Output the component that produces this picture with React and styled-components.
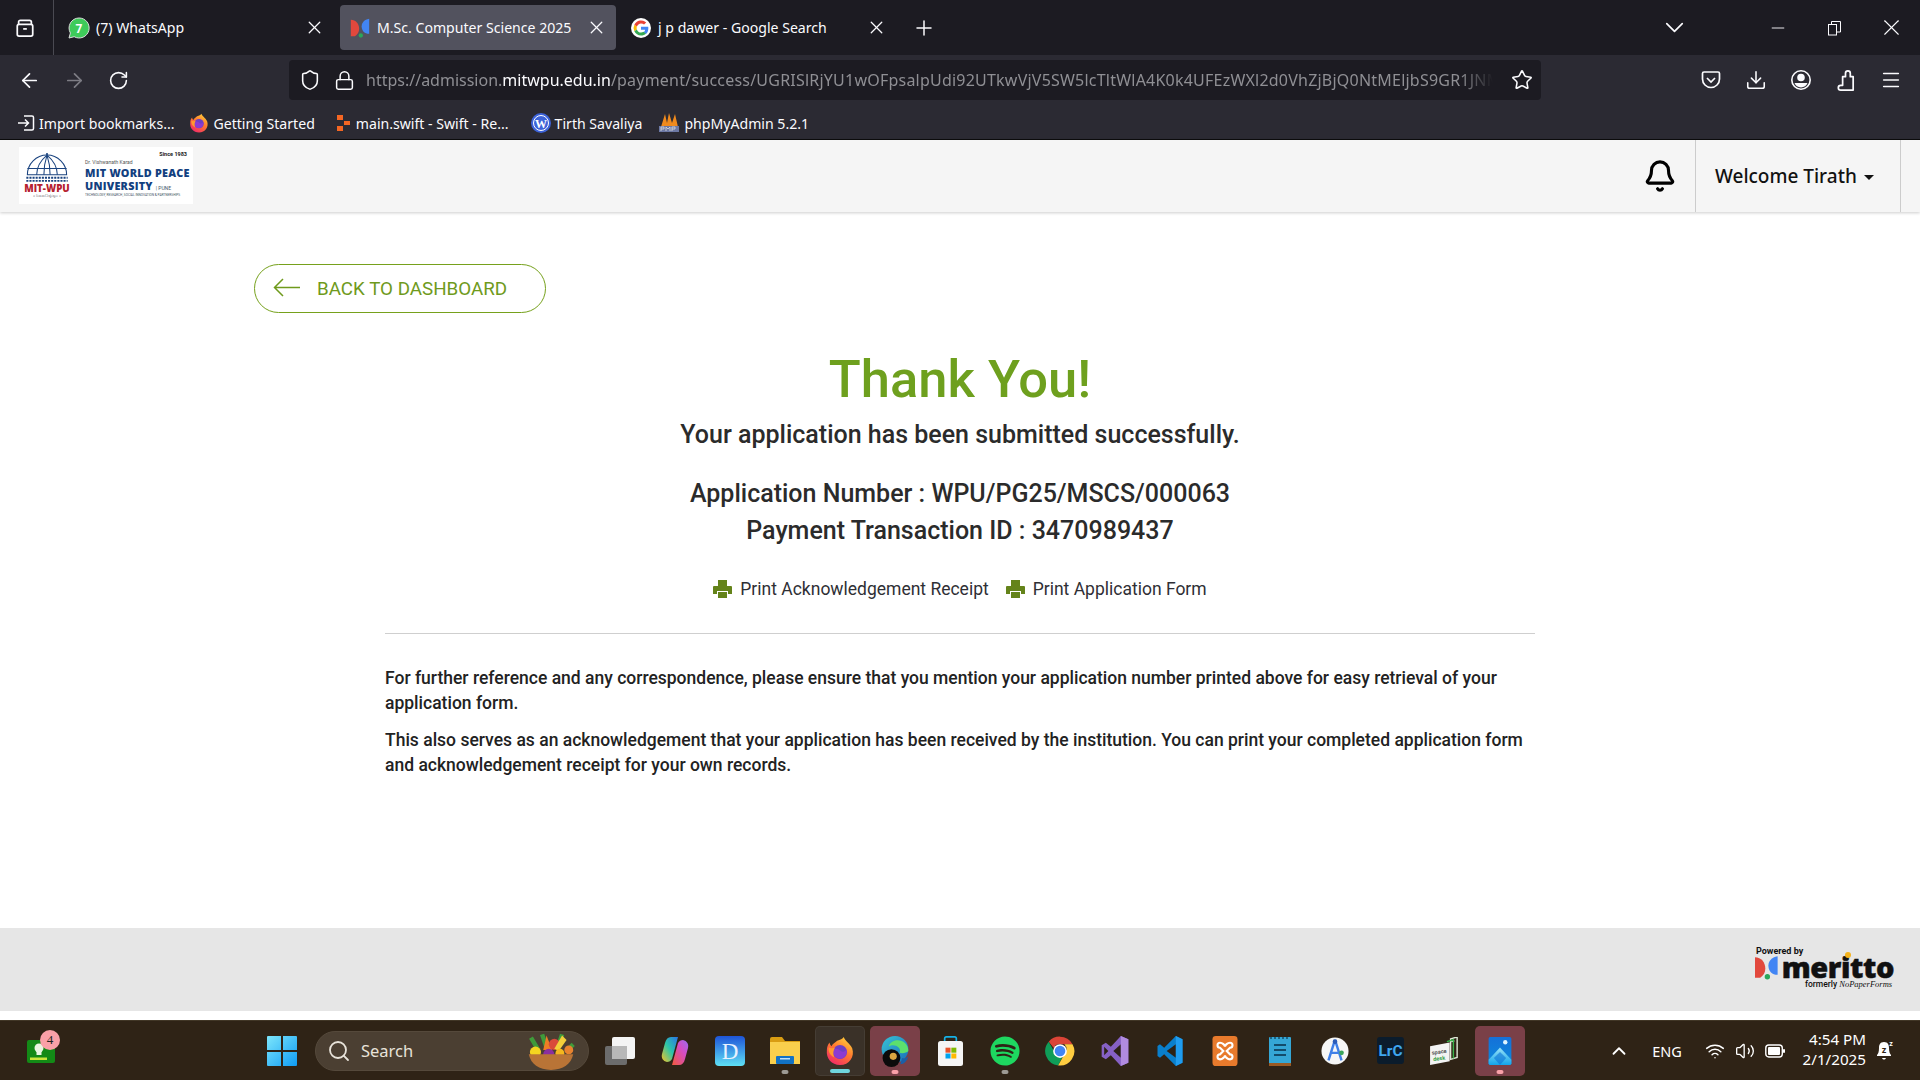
import React from "react";
import styled, { createGlobalStyle } from "styled-components";
import {
  ArrowLeft, ArrowRight, RotateCw, Shield, Lock, Star, Download, Menu, X, Plus,
  ChevronDown, ChevronUp, Minus, Bell, Search, Wifi, Volume2,
} from "lucide-react";
import { FaSpotify } from "react-icons/fa";

const Global = createGlobalStyle`
  html, body { margin: 0; padding: 0; background: #fff; }
  * { box-sizing: border-box; }
`;
const CHROME = `"Noto Sans", "Open Sans", sans-serif`;
const PAGE = `Roboto, "Liberation Sans", sans-serif`;

const Page = styled.div`
  width: 1920px; height: 1080px; overflow: hidden; display: flex; flex-direction: column;
  background: #fff; font-family: ${PAGE};
`;
const TabStrip = styled.div`
  height: 55px; background: #1c1b22; display: flex; align-items: center; color: #fbfbfe; flex: none;
`;
const TabGroupButton = styled.div`
  width: 54px; height: 55px; padding-right: 3px; border-right: 1px solid #4a4a52; display: flex; align-items: center; justify-content: center;
`;
const Tab = styled.div`
  width: 276px; height: 45px; margin-right: ${p => p.$mr || 0}px; border-radius: 4px; display: flex; align-items: center;
  padding: 0 ${p => p.$pr}px 0 ${p => p.$pl}px; gap: ${p => p.$gap}px; font: 400 14.1px ${CHROME}; background: ${p => p.$active ? "#52525e" : "transparent"};
  span { flex: 1; white-space: nowrap; }
`;
const NewTab = styled.div`margin-left: 16px; display: flex;`;
const WindowControls = styled.div`
  margin-left: auto; display: flex; align-items: center;
`;
const ListTabs = styled.div`margin-right: 59px; display: flex;`;
const WinButton = styled.div`width: 57px; display: flex; justify-content: center;`;

const Toolbar = styled.div`
  height: 45px; background: #2b2a33; display: flex; align-items: center; flex: none; color: #fbfbfe; padding-left: 18px;
`;
const NavButton = styled.div`width: 45px; margin-top: 5px; display: flex; align-items: center; color: ${p => p.$dim ? "#7d7c84" : "#fbfbfe"};`;
const UrlBar = styled.div`
  width: 1252px; height: 40px; margin: 5px 0 0 136px; background: #1c1b22; border-radius: 4px;
  display: flex; align-items: center; padding: 0 8px 0 3px; flex: none;
`;
const UrlIcon = styled.div`width: 35px; flex: none; display: flex; justify-content: center;`;
const UrlText = styled.div`
  flex: 1; overflow: hidden; white-space: nowrap; margin: 0 18px 0 4px; font: 400 16px ${CHROME}; color: #8f8f94;
  -webkit-mask-image: linear-gradient(to right, #000 97%, transparent 100%);
  b { font-weight: 400; color: #fbfbfe; }
  span { letter-spacing: .22px; }
`;
const ToolActions = styled.div`
  display: flex; align-items: center; margin: 5px 0 0 147px;
`;
const ToolIcon = styled.div`width: 45px; display: flex; justify-content: center;`;

const Bookmarks = styled.div`
  height: 40px; background: #2b2a33; border-bottom: 1px solid #0c0c0d; display: flex; align-items: center; padding: 7px 0 0 17px; color: #fbfbfe;
  flex: none; font: 400 14.1px ${CHROME};
`;
const Bookmark = styled.div`
  display: flex; align-items: center; gap: 4px; margin-right: ${p => p.$mr}px; white-space: nowrap;
`;

const Header = styled.header`
  height: 72px; background: #f5f5f5; box-shadow: 0 1px 3px rgba(0,0,0,.2); display: flex; align-items: stretch; flex: none;
  position: relative; padding-left: 19px; padding-right: 19px;
`;
const Logo = styled.div`
  width: 174px; height: 57px; margin-top: 7px; background: #fff; display: flex; align-items: center; padding: 0 5px 0 5px; gap: 2px; position: relative;
`;
const LogoMark = styled.div`width: 48px; display: flex; flex-direction: column; align-items: center;`;
const LogoWpu = styled.div`font: 800 9.8px/11px "Open Sans", sans-serif; color: #b5202f; margin-top: -1px; white-space: nowrap;`;
const LogoSub = styled.div`font: 400 3px/5px ${PAGE}; color: #555;`;
const LogoRule = styled.div`width: 1px; height: 44px; background: #1e4a86; margin: 0 6px 0 5px;`;
const LogoText = styled.div`display: flex; flex-direction: column; color: #12407f; white-space: nowrap; margin-top: 6px;`;
const LogoSince = styled.div`position: absolute; top: 4px; right: 6px; font: 700 5.5px ${PAGE}; color: #222;`;
const LogoSmall = styled.div`font: 400 5px/7px ${PAGE}; color: #555;`;
const LogoBig = styled.div`font: 800 10.8px/13px "Open Sans", sans-serif; letter-spacing: .25px; span { font: 400 5px ${PAGE}; color: #456; letter-spacing: 0; }`;
const LogoTiny = styled.div`font: 400 3.2px/6px ${PAGE}; color: #456;`;
const BellBox = styled.div`margin-left: auto; display: flex; align-items: center; padding-right: 18px; color: #000;`;
const Welcome = styled.div`
  width: 206px; border-left: 1px solid #ccc; border-right: 1px solid #ccc; display: flex; align-items: center; padding-left: 19px;
  font: 500 19px ${CHROME}; color: #111; white-space: nowrap;
  &::after { content: ""; margin-left: 7px; margin-top: 3px; border-left: 5px solid transparent; border-right: 5px solid transparent; border-top: 5px solid #111; }
`;

const Main = styled.main`flex: 1; display: flex; flex-direction: column; align-items: stretch; background: #fff; min-height: 0;`;
const BackRow = styled.div`padding: 52px 0 0 254px;`;
const BackButton = styled.a`
  width: 292px; height: 49px; border: 1px solid #76a11c; border-radius: 25px; display: flex; align-items: center; padding-left: 18px;
  color: #6f9a1c; font: 400 18.8px ${PAGE}; gap: 17px; text-decoration: none; white-space: nowrap;
  svg { margin-top: -3px; }
`;
const Center = styled.div`width: 1150px; margin: 0 auto; display: flex; flex-direction: column; align-items: stretch;`;
const Thanks = styled.h1`margin: 33px 0 0; text-align: center; font: 500 52.5px/66px ${PAGE}; color: #6ea01e;`;
const Submitted = styled.h2`margin: 5px 0 0; text-align: center; font: 500 25px/36px ${PAGE}; color: #2b2b2b;`;
const AppNumbers = styled.div`margin-top: 23px; text-align: center; font: 500 25px/36.5px ${PAGE}; color: #2b2b2b;`;
const PrintRow = styled.div`margin-top: 26px; display: flex; justify-content: center; gap: 17px; height: 27px; align-items: center;`;
const PrintLink = styled.a`
  display: flex; align-items: center; gap: 8px; color: #2f2f35; font: 400 17.5px ${PAGE}; white-space: nowrap;
`;
const Rule = styled.div`height: 1px; background: #cfcfcf; margin-top: 31px;`;
const Para = styled.p`
  margin: ${p => p.$mt}px 0 0; font: 500 17.5px/25px ${PAGE}; color: #222;
`;
const Footer = styled.footer`height: 83px; background: #e6e6e6; border-bottom: 1px solid #e6e6e6; flex: none; display: flex; justify-content: flex-end; padding: 18px 26px 0 0;`;
const Meritto = styled.div`width: 140px; display: flex; flex-direction: column; color: #111; position: relative; padding-left: 0;`;
const Powered = styled.div`font: 700 9px/10px ${PAGE}; margin-left: 2px;`;
const MerittoLine = styled.div`display: flex; align-items: center; height: 22px; gap: 3px;`;
const MerittoWord = styled.div`font: 800 29px/22px "Open Sans", sans-serif; letter-spacing: -.4px; -webkit-text-stroke: .5px #111;`;
const MerittoDot = styled.div`position: absolute; left: 91px; top: 6px; width: 6px; height: 6px; border-radius: 50%; background: #f5b21a;`;
const Formerly = styled.div`font: 500 8.5px/11px ${PAGE}; margin: 1px 0 0 51px; white-space: nowrap; i { font-family: "Liberation Serif", serif; }`;
const FooterGap = styled.div`height: 9px; background: #fff; flex: none;`;

const Taskbar = styled.div`
  height: 60px; background: #2f2316; border-top: 1px solid #413626; display: flex; align-items: center; flex: none; position: relative; color: #fff; font-family: ${CHROME};
`;
const Widget = styled.div`width: 28px; height: 23px; margin-left: 27px; margin-top: 1px; position: relative; flex: none; display: flex;`;
const Badge = styled.div`
  position: absolute; top: -10px; right: -5px; width: 20px; height: 20px; border-radius: 50%; background: #f9a0a8; color: #222; font: 400 13px/20px "Liberation Serif", serif; text-align: center;
`;
const Dock = styled.div`display: flex; align-items: center; margin-left: 202px;`;
const Cell = styled.div`
  width: 50px; height: 50px; margin-right: ${p => p.$mr ?? 5}px; border-radius: 5px; display: flex; align-items: center; justify-content: center; position: relative; flex: none;
  background: ${p => p.$bg || "transparent"};
  border: ${p => p.$bd ? "1px solid rgba(255,255,255,.06)" : "none"};
`;
const Dot = styled.div`
  position: absolute; bottom: 2px; left: 50%; transform: translateX(-50%); height: 4px; border-radius: 2px; width: ${p => p.$w || 7}px; background: ${p => p.$c || "#9d9a94"};
`;
const SearchPill = styled.div`
  width: 274px; height: 40px; margin: 0 6px 0 8px; border-radius: 20px; background: #4b3f32; display: flex; align-items: center; padding: 0 11px; color: #e8e3da; font: 400 16.5px ${CHROME}; gap: 10px; flex: none; position: relative; border: 1px solid #55493b;
`;
const Bowl = styled.div`position: absolute; right: 5px; top: -1px; display: flex;`;
const Tray = styled.div`margin-left: auto; display: flex; align-items: center; color: #fff; padding-right: 20px;`;
const TrayItem = styled.div`display: flex; justify-content: center; width: ${p => p.$w}px; font: 400 14.5px ${CHROME};`;
const Clock = styled.div`text-align: right; font: 400 15.2px/20px ${CHROME}; width: 76px; margin: 0 4px 4px 0; white-space: nowrap;`;

const WhatsApp = () => (
  <svg width="22" height="22" viewBox="0 0 22 22"><path d="M11 1a10 10 0 0 0-8.6 15L1 21l5.2-1.3A10 10 0 1 0 11 1z" fill="#3ecb5a" stroke="#dcdcdc" strokeWidth="1"/><text x="11" y="15.5" textAnchor="middle" fontSize="12" fontWeight="700" fill="#fff" fontFamily="Roboto">7</text></svg>
);
const MerittoMark = ({ s = 20 }) => (
  <svg width={s} height={s} viewBox="0 0 24 24"><path d="M1 2c6 0 10 5 10 11 0 4-2 7-5 9H1z" fill="#e2483d"/><path d="M23 1v18h-2c-5-1-7-5-7-9s3-8 9-9z" fill="#4285f4"/><circle cx="13" cy="21" r="2.6" fill="#2aa65a"/></svg>
);
const GoogleG = () => (
  <svg width="20" height="20" viewBox="0 0 48 48"><circle cx="24" cy="24" r="24" fill="#fff"/><path fill="#ea4335" d="M24 13c3 0 5.400 1 7.300 2.800l5.200-5.200A18 18 0 0 0 8 16l6 4.700C15.600 16.300 19.400 13 24 13z"/><path fill="#4285f4" d="M41.600 24.500c0-1.300-.1-2.300-.3-3.500H24v7h10c-.4 2.400-2 4.600-4 6l6 4.600c3.500-3.300 5.600-8 5.600-14.100z"/><path fill="#fbbc05" d="M14 27.300a10.500 10.500 0 0 1 0-6.600L8 16a18 18 0 0 0 0 16z"/><path fill="#34a853" d="M24 42c5 0 9-1.600 12-4.400L30 33c-1.600 1.100-3.600 1.900-6 1.900-4.600 0-8.400-3.200-10-7.600L8 32a18 18 0 0 0 16 10z"/></svg>
);
const Firefox = ({ s = 20 }) => (
  <svg width={s} height={s} viewBox="0 0 32 32">
    <defs><linearGradient id={`ff${s}`} x1="0.8" y1="0" x2="0.2" y2="1"><stop offset="0" stopColor="#ffd43a"/><stop offset=".45" stopColor="#ff7a2f"/><stop offset="1" stopColor="#f0256b"/></linearGradient></defs>
    <path fill={`url(#ff${s})`} d="M20 1c1 4 6 6 9 12 3 9-3 18-13 18C7 31 1 24 2 15c0-3 1-6 3-8 0 2 1 3 2 4 1-3 4-4 6-6 3-1 6-2 7-4z"/>
    <circle cx="16" cy="17" r="7.500" fill="#6d3fc4"/><path d="M9 15c3-3 6-1 8 1s5 0 6-2c1 5-2 10-7 10s-8-4-7-9z" fill="#8c3bd1"/>
    <path d="M4 12c2 2 5 1 7 0-2 3-3 7-1 11-4-2-7-6-6-11z" fill="#ff9a2e"/>
  </svg>
);
const ArchiveIcon = () => (
  <svg width="20" height="20" viewBox="0 0 22 22" fill="none" stroke="#fbfbfe" strokeWidth="1.900"><rect x="2.500" y="7" width="17" height="13" rx="2"/><path d="M4 7V4.500c0-1.300.7-2 2-2h10c1.300 0 2 .7 2 2V7"/><path d="M9 12h4"/></svg>
);
const ImportIcon = () => (
  <svg width="18" height="18" viewBox="0 0 18 18" fill="none" stroke="#fbfbfe" strokeWidth="1.500"><path d="M7 2h8a1.500 1.500 0 0 1 1.500 1.500v11A1.500 1.500 0 0 1 15 16H7"/><path d="M1 9h10M8 5.500 11.500 9 8 12.500"/></svg>
);
const SwiftBlocks = () => (
  <svg width="16" height="18" viewBox="0 0 16 18"><rect x="1" y="1" width="6" height="5" fill="#f46623"/><rect x="8" y="7" width="6" height="4" fill="#f46623"/><rect x="1" y="12" width="6" height="5" fill="#f46623"/></svg>
);
const WordPress = () => (
  <svg width="20" height="20" viewBox="0 0 20 20"><circle cx="10" cy="10" r="10" fill="#3d63d8"/><circle cx="10" cy="10" r="7.500" fill="none" stroke="#fff" strokeWidth="1"/><text x="10" y="14.500" textAnchor="middle" fontSize="12" fontWeight="700" fill="#fff" fontFamily="Liberation Serif">W</text></svg>
);
const PhpMyAdmin = () => (
  <svg width="22" height="22" viewBox="0 0 22 22"><path d="M3 15 7 2l2 9 2-10 3 10 3-9 3 13z" fill="#f08a1d"/><rect x="1" y="14" width="20" height="6" fill="#6c78a4"/><path d="M3 19v-4h3v2H3M8 19v-4l2 2 2-2v4M14 19v-4h3v2h-3" fill="none" stroke="#ddd" strokeWidth=".8"/></svg>
);
const PocketIcon = () => (
  <svg width="22" height="22" viewBox="0 0 22 22" fill="none" stroke="#fbfbfe" strokeWidth="1.700"><path d="M4 3h14a1.500 1.500 0 0 1 1.500 1.500V10a8.500 8.500 0 0 1-17 0V4.500A1.500 1.500 0 0 1 4 3z"/><path d="m7 9 4 4 4-4"/></svg>
);
const AccountIcon = () => (
  <svg width="22" height="22" viewBox="0 0 22 22" fill="none" stroke="#fbfbfe" strokeWidth="1.600"><circle cx="11" cy="11" r="9.200"/><circle cx="11" cy="8.500" r="3" fill="#fbfbfe"/><path d="M4.500 14h13a7 7 0 0 1-13 0z" fill="#fbfbfe" stroke="none"/></svg>
);
const PuzzleIcon = () => (
  <svg width="23" height="23" viewBox="0 0 24 24" fill="none" stroke="#fbfbfe" strokeWidth="1.800" strokeLinejoin="round"><path d="M9 8h3V4.500a2.500 2.500 0 0 1 5 0V8h3v14H7a2.500 2.500 0 0 1 0-5h2z"/></svg>
);
const RestoreIcon = () => (
  <svg width="14" height="16" viewBox="0 0 14 16" fill="none" stroke="#fbfbfe" strokeWidth="1"><rect x=".5" y="4.500" width="8" height="10.500"/><path d="M3.500 4.500v-3h9v10.500H8.500"/></svg>
);
const BackArrow = () => (
  <svg width="27" height="19" viewBox="0 0 27 19" fill="none" stroke="#6f9a1c" strokeWidth="1.500"><path d="M1 9.500h26M10 1 1.500 9.500 10 18"/></svg>
);
const PrinterIcon = () => (
  <svg width="19" height="18" viewBox="0 0 19 18" fill="#64831a"><path d="M5 0h9v6H5zM0 7a1 1 0 0 1 1-1h17a1 1 0 0 1 1 1v7h-4v-3H4v3H0z"/><path d="M5 12h9v6H5z"/></svg>
);
const Dome = () => (
  <svg width="46" height="31" viewBox="0 0 44 30" fill="none" stroke="#1a437f" strokeWidth="1">
    <path d="M3 21a19 19 0 0 1 38 0z"/><path d="M12 21c0-8 4-14 10-19 6 5 10 11 10 19M19 21c0-7 1-13 3-19 2 6 3 12 3 19M3 15h38"/><path d="M22 2V0" strokeWidth="1.500"/>
    <path d="M2 24h40M2 27h40" strokeWidth="1.800" strokeDasharray="2 1"/>
  </svg>
);
const TipsIcon = () => (
  <svg width="28" height="23" viewBox="0 0 28 23"><rect width="28" height="23" rx="2" fill="#138a16"/><circle cx="12" cy="8" r="4.500" fill="#e8f5e0"/><rect x="9.500" y="11" width="5" height="4" fill="#e8f5e0"/><rect x="3" y="17.500" width="17" height="2.500" fill="#c9e63a"/></svg>
);
const StartIcon = () => (
  <svg width="30" height="30" viewBox="0 0 30 30"><defs><linearGradient id="st" x1="0" y1="0" x2="1" y2="1"><stop offset="0" stopColor="#7de6fb"/><stop offset="1" stopColor="#0f9cf5"/></linearGradient></defs><path fill="url(#st)" d="M0 1a1 1 0 0 1 1-1h13v14H0zM16 0h13a1 1 0 0 1 1 1v13H16zM0 16h14v14H1a1 1 0 0 1-1-1zM16 16h14v13a1 1 0 0 1-1 1H16z"/></svg>
);
const BowlIcon = () => (
  <svg width="64" height="40" viewBox="0 0 48 36"><path d="M6 6l6 10M16 3l4 12M34 3l-4 12M44 12l-6 6" stroke="#3f9a3a" strokeWidth="4"/><path d="M20 4l5 13-8 0z" fill="#ee7d24"/><circle cx="27" cy="12" r="5" fill="#d94a3a"/><path d="M34 4l4 4-7 10-4-2z" fill="#f3cf3a"/><circle cx="10" cy="19" r="5" fill="#f4d520"/><circle cx="22" cy="21" r="5" fill="#8a2fa0"/><circle cx="32" cy="20" r="4" fill="#f4b81e"/><circle cx="40" cy="17" r="4" fill="#e8832f"/><path d="M4 21h40c-2 9-9 14-20 14S6 30 4 21z" fill="#b97436"/></svg>
);
const TaskView = () => (
  <svg width="30" height="28" viewBox="0 0 30 28"><rect x="0" y="9" width="22" height="19" rx="2" fill="#6c6c6c"/><rect x="7" y="0" width="23" height="22" rx="2" fill="#f4f4f4"/><rect x="7" y="9" width="15" height="13" fill="#b8b8b8"/></svg>
);
const Copilot = () => (
  <svg width="28" height="30" viewBox="0 0 28 30"><defs><linearGradient id="cp1" x1="0" y1="1" x2="1" y2="0"><stop offset="0" stopColor="#f7c325"/><stop offset=".5" stopColor="#2cc6a8"/><stop offset="1" stopColor="#2a73e8"/></linearGradient><linearGradient id="cp2" x1="0" y1="1" x2="1" y2="0"><stop offset="0" stopColor="#f25a3a"/><stop offset=".6" stopColor="#d64cc3"/><stop offset="1" stopColor="#9a6cf0"/></linearGradient></defs><path fill="url(#cp1)" d="M10 1h7l-6 22c-1 2-3 3-5 3-4-1-6-4-5-8l3-11c1-4 3-6 6-6z"/><path fill="url(#cp2)" d="M18 29h-7l6-22c1-2 3-3 5-3 4 1 6 4 5 8l-3 11c-1 4-3 6-6 6z"/></svg>
);
const DApp = () => (
  <svg width="30" height="30" viewBox="0 0 30 30"><defs><linearGradient id="dp" x1="0" y1="0" x2="0" y2="1"><stop offset="0" stopColor="#1e54d8"/><stop offset="1" stopColor="#5fe1f5"/></linearGradient></defs><rect width="30" height="30" rx="4" fill="url(#dp)"/><text x="15" y="23" textAnchor="middle" fontSize="23" fill="#e8f2ff" fontFamily="Liberation Serif">D</text></svg>
);
const Folder = () => (
  <svg width="30" height="27" viewBox="0 0 30 27"><path d="M0 2a2 2 0 0 1 2-2h10l3 4h15v6H0z" fill="#d99d12"/><rect y="5" width="30" height="22" fill="#f9cf4c"/><rect x="6" y="19" width="18" height="8" rx="1" fill="#1272c4"/><rect x="10" y="21" width="10" height="1.500" fill="#bfe0f7"/></svg>
);
const Edge = () => (
  <svg width="32" height="32" viewBox="0 0 32 36"><defs><linearGradient id="ed" x1="0" y1="0" x2="1" y2="1"><stop offset="0" stopColor="#38c2d6"/><stop offset="1" stopColor="#1a6fb8"/></linearGradient></defs><circle cx="16" cy="16" r="15" fill="url(#ed)"/><path d="M31 18c0-8-6-12-12-12-5 0-9 3-10 7 3-2 8-2 11 1 2 2 2 4 1 6 4 1 8 0 10-2z" fill="#5ce06e"/><circle cx="12" cy="26" r="10" fill="#0b0b0b"/><circle cx="14" cy="24" r="4" fill="#d9a441"/><path d="M24 26c3 1 5 0 7-2-1 5-5 9-9 9z" fill="#1a5fa8"/></svg>
);
const Store = () => (
  <svg width="29" height="30" viewBox="0 0 30 36"><path d="M8 7V3c0-1 1-2 2-2h10c1 0 2 1 2 2v4" fill="none" stroke="#16b1e6" strokeWidth="2"/><rect y="6" width="30" height="30" rx="3" fill="#f5f5f5"/><rect x="9" y="14" width="6" height="6" fill="#e8532b"/><rect x="16" y="14" width="6" height="6" fill="#7fba00"/><rect x="9" y="21" width="6" height="6" fill="#00a4ef"/><rect x="16" y="21" width="6" height="6" fill="#ffb900"/></svg>
);
const ChromeIcon = () => (
  <svg width="30" height="30" viewBox="0 0 48 48"><path fill="#db4437" d="M24 1a23 23 0 0 1 20 12H24a11 11 0 0 0-10 6L6 9A23 23 0 0 1 24 1z"/><path fill="#0f9d58" d="M6 9l10 18a10 10 0 0 0 12 6l-7 14A23 23 0 0 1 6 9z"/><path fill="#ffcd40" d="M44 13a23 23 0 0 1-23 34l10-18a11 11 0 0 0 0-16z"/><circle cx="24" cy="24" r="11" fill="#fff"/><circle cx="24" cy="24" r="8.500" fill="#4285f4"/></svg>
);
const VS = () => (
  <svg width="30" height="30" viewBox="0 0 32 36"><path d="M23 0l9 4v28l-9 4-12-13-6 5-5-3V11l5-3 6 5z" fill="#8661c5"/><path d="M23 10v16l-9-8z" fill="#2d2216"/><path d="M3 13v10l5-5z" fill="#2d2216"/><path d="M23 0l9 4v28l-9 4z" fill="#b18be0"/></svg>
);
const VSCode = () => (
  <svg width="30" height="30" viewBox="0 0 30 36"><path d="M22 0l8 4v28l-8 4L8 22l-5 4-3-2v-12l3-2 5 4z" fill="#0a7fcc"/><path d="M22 10v16L11 18z" fill="#2d2216"/><path d="M22 0l8 4v28l-8 4z" fill="#1f9cf0"/></svg>
);
const Xampp = () => (
  <svg width="30" height="30" viewBox="0 0 30 36"><rect width="30" height="36" rx="4" fill="#e87a2c"/><path d="M9 8c-4 0-4 6 0 6l4 4-4 4c-4 0-4 6 0 6 3 0 6-3 6-5 0 2 3 5 6 5 4 0 4-6 0-6l-4-4 4-4c4 0 4-6 0-6-3 0-6 3-6 5 0-2-3-5-6-5z" fill="none" stroke="#fff" strokeWidth="2.500"/></svg>
);
const Notepad = () => (
  <svg width="22" height="30" viewBox="0 0 22 30"><rect y="1" width="22" height="29" rx="1" fill="#35a7d6"/><rect y="27" width="22" height="3" fill="#9a5a24"/><path d="M5 9h12M5 14h12M5 19h12" stroke="#134d6c" strokeWidth="2"/><path d="M2 1v2M6 1v2M10 1v2M14 1v2M18 1v2" stroke="#134d6c" strokeWidth="1.500"/></svg>
);
const AndroidStudio = () => (
  <svg width="28" height="30" viewBox="0 0 30 32"><circle cx="15" cy="16" r="14.500" fill="#f6f6f6"/><path d="M15 4 8 26M15 4l7 22M10 18h10" stroke="#3f7fe8" strokeWidth="2.600" fill="none"/><circle cx="15" cy="6" r="2.500" fill="#2a5bb8"/><circle cx="22" cy="18" r="2.500" fill="#3ba55c"/></svg>
);
const Lrc = () => (
  <svg width="27" height="27" viewBox="0 0 28 28"><rect width="28" height="28" rx="3" fill="#0b1c2c"/><text x="14" y="20" textAnchor="middle" fontSize="16" fontWeight="700" fill="#3fa7f0" fontFamily="Roboto">LrC</text></svg>
);
const Spacedesk = () => (
  <svg width="30" height="28" viewBox="0 0 32 30"><path d="M22 2l7-2v22l-7 2zM26 4l-3 1" fill="none" stroke="#dfe9d8" strokeWidth="1.500"/><path d="M18 5l7-2v20" fill="none" stroke="#39b24a" strokeWidth="1.500"/><path d="M0 10l21-4v20L0 30z" fill="#f3f3f3"/><text x="10" y="18" textAnchor="middle" fontSize="6" fontWeight="700" fill="#555" fontFamily="Roboto" transform="rotate(-8 10 18)">space</text><text x="10" y="25" textAnchor="middle" fontSize="6" fontWeight="700" fill="#39a24a" fontFamily="Roboto" transform="rotate(-8 10 25)">desk</text></svg>
);
const Photos = () => (
  <svg width="26" height="28" viewBox="0 0 26 32"><defs><linearGradient id="ph" x1="0" y1="0" x2="0" y2="1"><stop offset="0" stopColor="#1570d8"/><stop offset="1" stopColor="#0b8bdc"/></linearGradient><linearGradient id="ph2" x1="0" y1="0" x2="0" y2="1"><stop offset="0" stopColor="#9be3f7"/><stop offset="1" stopColor="#12a4ea"/></linearGradient></defs><rect width="26" height="32" rx="2" fill="url(#ph)"/><circle cx="19" cy="6" r="2.500" fill="#dff4ff"/><path d="M0 26 13 12l13 14v4a2 2 0 0 1-2 2H2a2 2 0 0 1-2-2z" fill="url(#ph2)"/><path d="M6 24l7-7 7 7-7 8z" fill="#0e72d4" opacity=".6"/></svg>
);
const BatteryIcon = () => (
  <svg width="20" height="14" viewBox="0 0 20 14" fill="none"><rect x=".8" y="1" width="16.500" height="12" rx="3" stroke="#fff" strokeWidth="1.400"/><rect x="3" y="3" width="12" height="8" rx="1" fill="#fff"/><rect x="18" y="5" width="2" height="4" rx="1" fill="#fff"/></svg>
);
const SnoozeBell = () => (
  <svg width="18" height="22" viewBox="0 0 18 22"><path d="M8 2c-4 0-5 3-5 6 0 4-1 6-2 7v1h14v-1c-1-1-2-3-2-7 0-3-1-6-5-6z" fill="#fff"/><path d="M6 18c1 2 3 2 4 0z" fill="#fff"/><text x="8" y="13" textAnchor="middle" fontSize="9" fontWeight="700" fill="#2f2316" fontFamily="Roboto">z</text><text x="15" y="6" textAnchor="middle" fontSize="7" fontWeight="700" fill="#fff" fontFamily="Roboto">z</text></svg>
);

export default function App() {
  return (
    <Page>
      <Global />
      <TabStrip>
        <TabGroupButton><ArchiveIcon /></TabGroupButton>
        <Tab $mr={10} $pr={5} $pl={14} $gap={6}><WhatsApp /><span>(7) WhatsApp</span><X size={21} strokeWidth={1.500} /></Tab>
        <Tab $active $mr={4} $pr={9} $pl={10} $gap={7}><MerittoMark /><span>M.Sc. Computer Science 2025</span><X size={21} strokeWidth={1.500} /></Tab>
        <Tab $pr={9} $pl={11} $gap={7}><GoogleG /><span>j p dawer - Google Search</span><X size={21} strokeWidth={1.500} /></Tab>
        <NewTab><Plus size={24} strokeWidth={1.500} /></NewTab>
        <WindowControls>
          <ListTabs><ChevronDown size={31} strokeWidth={1.300} /></ListTabs>
          <WinButton><Minus size={20} strokeWidth={1.100} /></WinButton>
          <WinButton><RestoreIcon /></WinButton>
          <WinButton><X size={27} strokeWidth={1} /></WinButton>
        </WindowControls>
      </TabStrip>
      <Toolbar>
        <NavButton><ArrowLeft size={23} strokeWidth={1.800} /></NavButton>
        <NavButton $dim><ArrowRight size={23} strokeWidth={1.800} /></NavButton>
        <NavButton><RotateCw size={21} strokeWidth={1.800} /></NavButton>
        <UrlBar>
          <UrlIcon><Shield size={22} strokeWidth={1.700} color="#fbfbfe" /></UrlIcon>
          <UrlIcon><Lock size={21} strokeWidth={1.700} color="#fbfbfe" /></UrlIcon>
          <UrlText>https://admission.<b>mitwpu.edu.in</b><span>/payment/success/UGRISlRjYU1wOFpsalpUdi92UTkwVjV5SW5lcTltWlA4K0k4UFEzWXl2d0VhZjBjQ0NtMEljbS9GR1JNM</span></UrlText>
          <Star size={22} strokeWidth={1.700} color="#fbfbfe" />
        </UrlBar>
        <ToolActions>
          <ToolIcon><PocketIcon /></ToolIcon>
          <ToolIcon><Download size={22} strokeWidth={1.700} /></ToolIcon>
          <ToolIcon><AccountIcon /></ToolIcon>
          <ToolIcon><PuzzleIcon /></ToolIcon>
          <ToolIcon><Menu size={22} strokeWidth={1.700} /></ToolIcon>
        </ToolActions>
      </Toolbar>
      <Bookmarks>
        <Bookmark $mr={15}><ImportIcon />Import bookmarks...</Bookmark>
        <Bookmark $mr={21}><Firefox />Getting Started</Bookmark>
        <Bookmark $mr={22}><SwiftBlocks />main.swift - Swift - Re...</Bookmark>
        <Bookmark $mr={16}><WordPress />Tirth Savaliya</Bookmark>
        <Bookmark $mr={0}><PhpMyAdmin />phpMyAdmin 5.2.1</Bookmark>
      </Bookmarks>
      <Header>
        <Logo>
          <LogoSince>Since 1983</LogoSince>
          <LogoMark><Dome /><LogoWpu>MIT-WPU</LogoWpu><LogoSub>॥ विश्वशान्तिर्ध्रुवं ध्रुवा ॥</LogoSub></LogoMark>
          <LogoRule />
          <LogoText>
            <LogoSmall>Dr. Vishwanath Karad</LogoSmall>
            <LogoBig>MIT WORLD PEACE</LogoBig>
            <LogoBig>UNIVERSITY <span>| PUNE</span></LogoBig>
            <LogoTiny>TECHNOLOGY, RESEARCH, SOCIAL INNOVATION &amp; PARTNERSHIPS</LogoTiny>
          </LogoText>
        </Logo>
        <BellBox><Bell size={34} strokeWidth={2.200} /></BellBox>
        <Welcome>Welcome Tirath</Welcome>
      </Header>
      <Main>
        <BackRow>
          <BackButton>
            <BackArrow />
            BACK TO DASHBOARD
          </BackButton>
        </BackRow>
        <Center>
          <Thanks>Thank You!</Thanks>
          <Submitted>Your application has been submitted successfully.</Submitted>
          <AppNumbers>
            <div>Application Number : WPU/PG25/MSCS/000063</div>
            <div>Payment Transaction ID : 3470989437</div>
          </AppNumbers>
          <PrintRow>
            <PrintLink><PrinterIcon />Print Acknowledgement Receipt</PrintLink>
            <PrintLink><PrinterIcon />Print Application Form</PrintLink>
          </PrintRow>
          <Rule />
          <Para $mt={32}>For further reference and any correspondence, please ensure that you mention your application number printed above for easy retrieval of your application form.</Para>
          <Para $mt={12}>This also serves as an acknowledgement that your application has been received by the institution. You can print your completed application form and acknowledgement receipt for your own records.</Para>
        </Center>
      </Main>
      <Footer>
        <Meritto>
          <Powered>Powered by</Powered>
          <MerittoDot />
          <MerittoLine><MerittoMark s={27} /><MerittoWord>meritto</MerittoWord></MerittoLine>
          <Formerly>formerly <i>NoPaperForms</i></Formerly>
        </Meritto>
      </Footer>
      <FooterGap />
      <Taskbar>
        <Widget><TipsIcon /><Badge>4</Badge></Widget>
        <Dock>
          <Cell $mr={0}><StartIcon /></Cell>
          <SearchPill>
            <Search size={24} strokeWidth={1.800} />Search
            <Bowl><BowlIcon /></Bowl>
          </SearchPill>
          <Cell><TaskView /></Cell>
          <Cell><Copilot /></Cell>
          <Cell><DApp /></Cell>
          <Cell><Folder /><Dot /></Cell>
          <Cell $bg="#3a3128" $bd><Firefox s={30} /><Dot $w={20} $c="#6fd5dc" /></Cell>
          <Cell $bg="#7a4048"><Edge /><Dot $c="#f9a0a8" /></Cell>
          <Cell><Store /></Cell>
          <Cell><FaSpotify size={30} color="#1ed760" /><Dot /></Cell>
          <Cell><ChromeIcon /></Cell>
          <Cell><VS /></Cell>
          <Cell><VSCode /></Cell>
          <Cell><Xampp /></Cell>
          <Cell><Notepad /></Cell>
          <Cell><AndroidStudio /></Cell>
          <Cell><Lrc /></Cell>
          <Cell><Spacedesk /></Cell>
          <Cell $bg="#7a4048"><Photos /><Dot $c="#f9a0a8" /></Cell>
        </Dock>
        <Tray>
          <TrayItem $w={30}><ChevronUp size={22} strokeWidth={2} /></TrayItem>
          <TrayItem $w={66}>ENG</TrayItem>
          <TrayItem $w={30}><Wifi size={20} strokeWidth={1.800} /></TrayItem>
          <TrayItem $w={30}><Volume2 size={20} strokeWidth={1.600} /></TrayItem>
          <TrayItem $w={30}><BatteryIcon /></TrayItem>
          <Clock>4:54 PM<br />2/1/2025</Clock>
          <TrayItem $w={30}><SnoozeBell /></TrayItem>
        </Tray>
      </Taskbar>
    </Page>
  );
}
